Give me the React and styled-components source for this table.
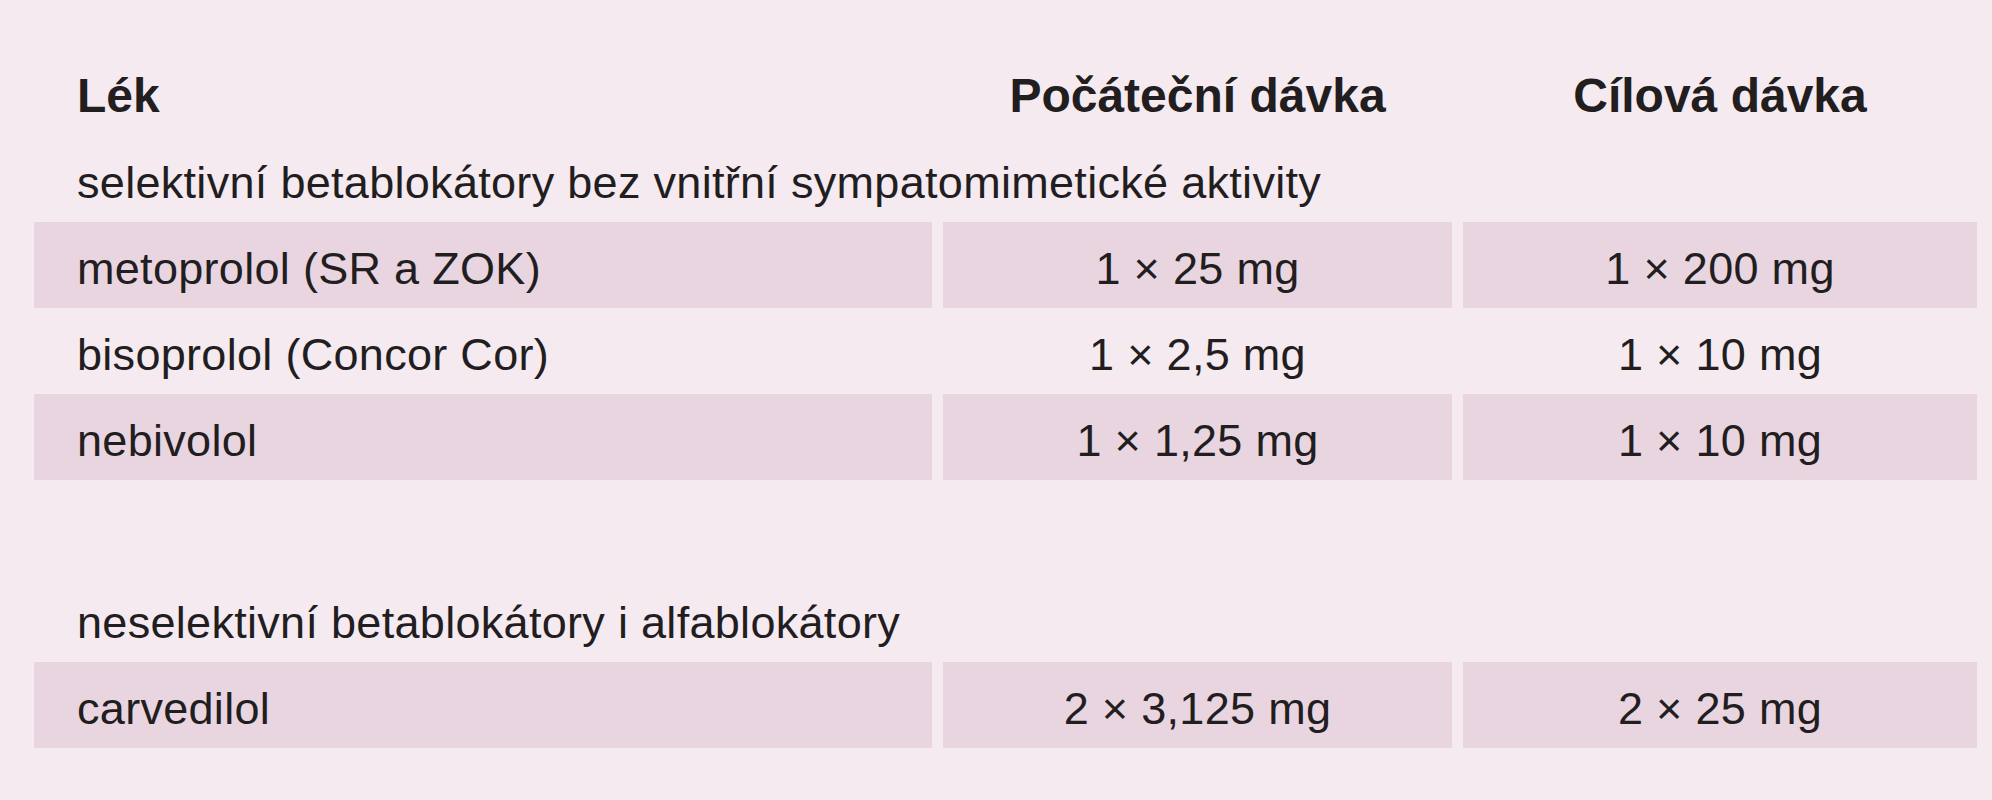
import React from 'react'
import styled, { createGlobalStyle } from 'styled-components'

const GlobalStyle = createGlobalStyle`
  html, body {
    margin: 0;
    padding: 0;
    background: #f4eaef;
  }
  body {
    font-family: "Liberation Sans", Arial, sans-serif;
    color: #221d1f;
  }
`

const groups = [
  {
    title: 'selektivní betablokátory bez vnitřní sympatomimetické aktivity',
    rows: [
      { drug: 'metoprolol (SR a ZOK)', start: '1 × 25 mg', target: '1 × 200 mg' },
      { drug: 'bisoprolol (Concor Cor)', start: '1 × 2,5 mg', target: '1 × 10 mg' },
      { drug: 'nebivolol', start: '1 × 1,25 mg', target: '1 × 10 mg' },
    ],
  },
  {
    title: 'neselektivní betablokátory i alfablokátory',
    rows: [
      { drug: 'carvedilol', start: '2 × 3,125 mg', target: '2 × 25 mg' },
    ],
  },
]

const Page = styled.div`
  width: 1992px;
  height: 800px;
  box-sizing: border-box;
  padding: 47px 15px 0 34px;
  background: #f4eaef;
  overflow: hidden;
`

const Table = styled.div`
  display: flex;
  flex-direction: column;
`

const Row = styled.div`
  display: grid;
  grid-template-columns: 898px 509px 514px;
  column-gap: 11px;
  height: 86px;
`

const HeaderRow = styled(Row)`
  margin-bottom: 3px;
`

const HeadCell = styled.div`
  box-sizing: border-box;
  height: 86px;
  padding-top: 10px;
  line-height: 78px;
  font-size: 48px;
  font-weight: bold;
  text-align: ${(p) => (p.$left ? 'left' : 'center')};
  padding-left: ${(p) => (p.$left ? '43px' : '0')};
`

const Cell = styled.div`
  box-sizing: border-box;
  height: 86px;
  padding-top: 8px;
  line-height: 78px;
  font-size: 45px;
  letter-spacing: 0.3px;
  white-space: nowrap;
  background: ${(p) => (p.$shaded ? '#e8d5e0' : 'transparent')};
  text-align: ${(p) => (p.$left ? 'left' : 'center')};
  padding-left: ${(p) => (p.$left ? '43px' : '0')};
`

const GroupTitle = styled.div`
  box-sizing: border-box;
  height: 86px;
  padding-top: 8px;
  padding-left: 43px;
  line-height: 78px;
  font-size: 45px;
  letter-spacing: 0.3px;
  white-space: nowrap;
`

const Spacer = styled.div`
  height: 96px;
`

export default function App() {
  return (
    <Page>
      <GlobalStyle />
      <Table>
        <HeaderRow>
          <HeadCell $left>Lék</HeadCell>
          <HeadCell>Počáteční dávka</HeadCell>
          <HeadCell>Cílová dávka</HeadCell>
        </HeaderRow>
        {groups.map((g, gi) => (
          <React.Fragment key={gi}>
            {gi > 0 && <Spacer />}
            <GroupTitle>{g.title}</GroupTitle>
            {g.rows.map((r, i) => (
              <Row key={i}>
                <Cell $left $shaded={i % 2 === 0}>{r.drug}</Cell>
                <Cell $shaded={i % 2 === 0}>{r.start}</Cell>
                <Cell $shaded={i % 2 === 0}>{r.target}</Cell>
              </Row>
            ))}
          </React.Fragment>
        ))}
      </Table>
    </Page>
  )
}
